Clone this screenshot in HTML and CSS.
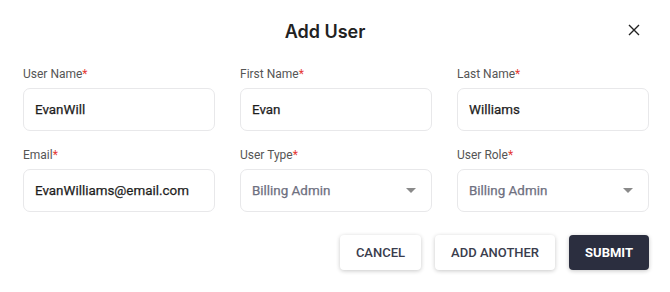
FILE: index.html
```html
<!DOCTYPE html>
<html>
<head>
<meta charset="utf-8">
<link rel="stylesheet" href="styles.css">
</head>
<body>
<div class="dialog">
  <div class="header">
    <h1 class="title">Add User</h1>
    <button class="close" aria-label="Close">
      <svg width="12" height="12" viewBox="0 0 12 12"><path d="M1 1L11 11M11 1L1 11" stroke="#222" stroke-width="1.4" fill="none"/></svg>
    </button>
  </div>
  <div class="grid">
    <div class="field">
      <label class="label">User Name<span class="req">*</span></label>
      <div class="input">EvanWill</div>
    </div>
    <div class="field">
      <label class="label">First Name<span class="req">*</span></label>
      <div class="input">Evan</div>
    </div>
    <div class="field">
      <label class="label">Last Name<span class="req">*</span></label>
      <div class="input">Williams</div>
    </div>
    <div class="field">
      <label class="label">Email<span class="req">*</span></label>
      <div class="input">EvanWilliams@email.com</div>
    </div>
    <div class="field">
      <label class="label">User Type<span class="req">*</span></label>
      <div class="input select"><span>Billing Admin</span><span class="caret"></span></div>
    </div>
    <div class="field">
      <label class="label">User Role<span class="req">*</span></label>
      <div class="input select"><span>Billing Admin</span><span class="caret"></span></div>
    </div>
  </div>
  <div class="footer">
    <button class="btn">CANCEL</button>
    <button class="btn">ADD ANOTHER</button>
    <button class="btn primary">SUBMIT</button>
  </div>
</div>
</body>
</html>
```
FILE: styles.css
```css
html, body {
  margin: 0;
  padding: 0;
  background: #fff;
}
.dialog {
  width: 670px;
  height: 292px;
  box-sizing: border-box;
  padding: 0 21px 0 23px;
  font-family: Roboto, "Liberation Sans", sans-serif;
}
.header {
  position: relative;
  height: 62px;
  display: flex;
  align-items: center;
  justify-content: center;
  padding-right: 22px;
}
.title {
  margin: 0;
  font-family: Inter, "Liberation Sans", sans-serif;
  font-size: 18px;
  font-weight: 600;
  color: #222;
  padding-top: 1px;
}
.close {
  position: absolute;
  right: 9px;
  top: 24px;
  width: 12px;
  height: 12px;
  padding: 0;
  border: 0;
  background: none;
  display: flex;
}
.grid {
  display: grid;
  grid-template-columns: 192px 192px 192px;
  column-gap: 25px;
  row-gap: 17px;
  margin-top: 5px;
}
.label {
  display: block;
  font-size: 12px;
  line-height: 14px;
  color: #555;
  margin-bottom: 7px;
}
.req {
  color: #e53935;
}
.input {
  height: 43px;
  box-sizing: border-box;
  border: 1px solid #e8e8ea;
  border-radius: 7px;
  padding: 0 11px;
  display: flex;
  align-items: center;
  font-size: 13.4px;
  font-weight: 400;
  color: #1e1e1e;
  -webkit-text-stroke: 0.25px #1e1e1e;
}
.select {
  justify-content: space-between;
  color: #6e7080;
  -webkit-text-stroke: 0.25px #6e7080;
  padding-right: 15px;
}
.caret {
  width: 0;
  height: 0;
  border-left: 5px solid transparent;
  border-right: 5px solid transparent;
  border-top: 5px solid #8a8a8a;
}
.footer {
  display: flex;
  justify-content: flex-end;
  gap: 14px;
  margin-top: 23px;
}
.btn {
  height: 35px;
  padding: 0 16px;
  border: 0;
  border-radius: 4px;
  background: #fff;
  box-shadow: 0 1px 4px rgba(0, 0, 0, 0.22);
  font-family: Roboto, "Liberation Sans", sans-serif;
  font-size: 13px;
  font-weight: 500;
  color: #3a3d4d;
  letter-spacing: 0;
}
.primary {
  background: #2b2e3f;
  color: #fff;
  font-weight: 700;
}
```
